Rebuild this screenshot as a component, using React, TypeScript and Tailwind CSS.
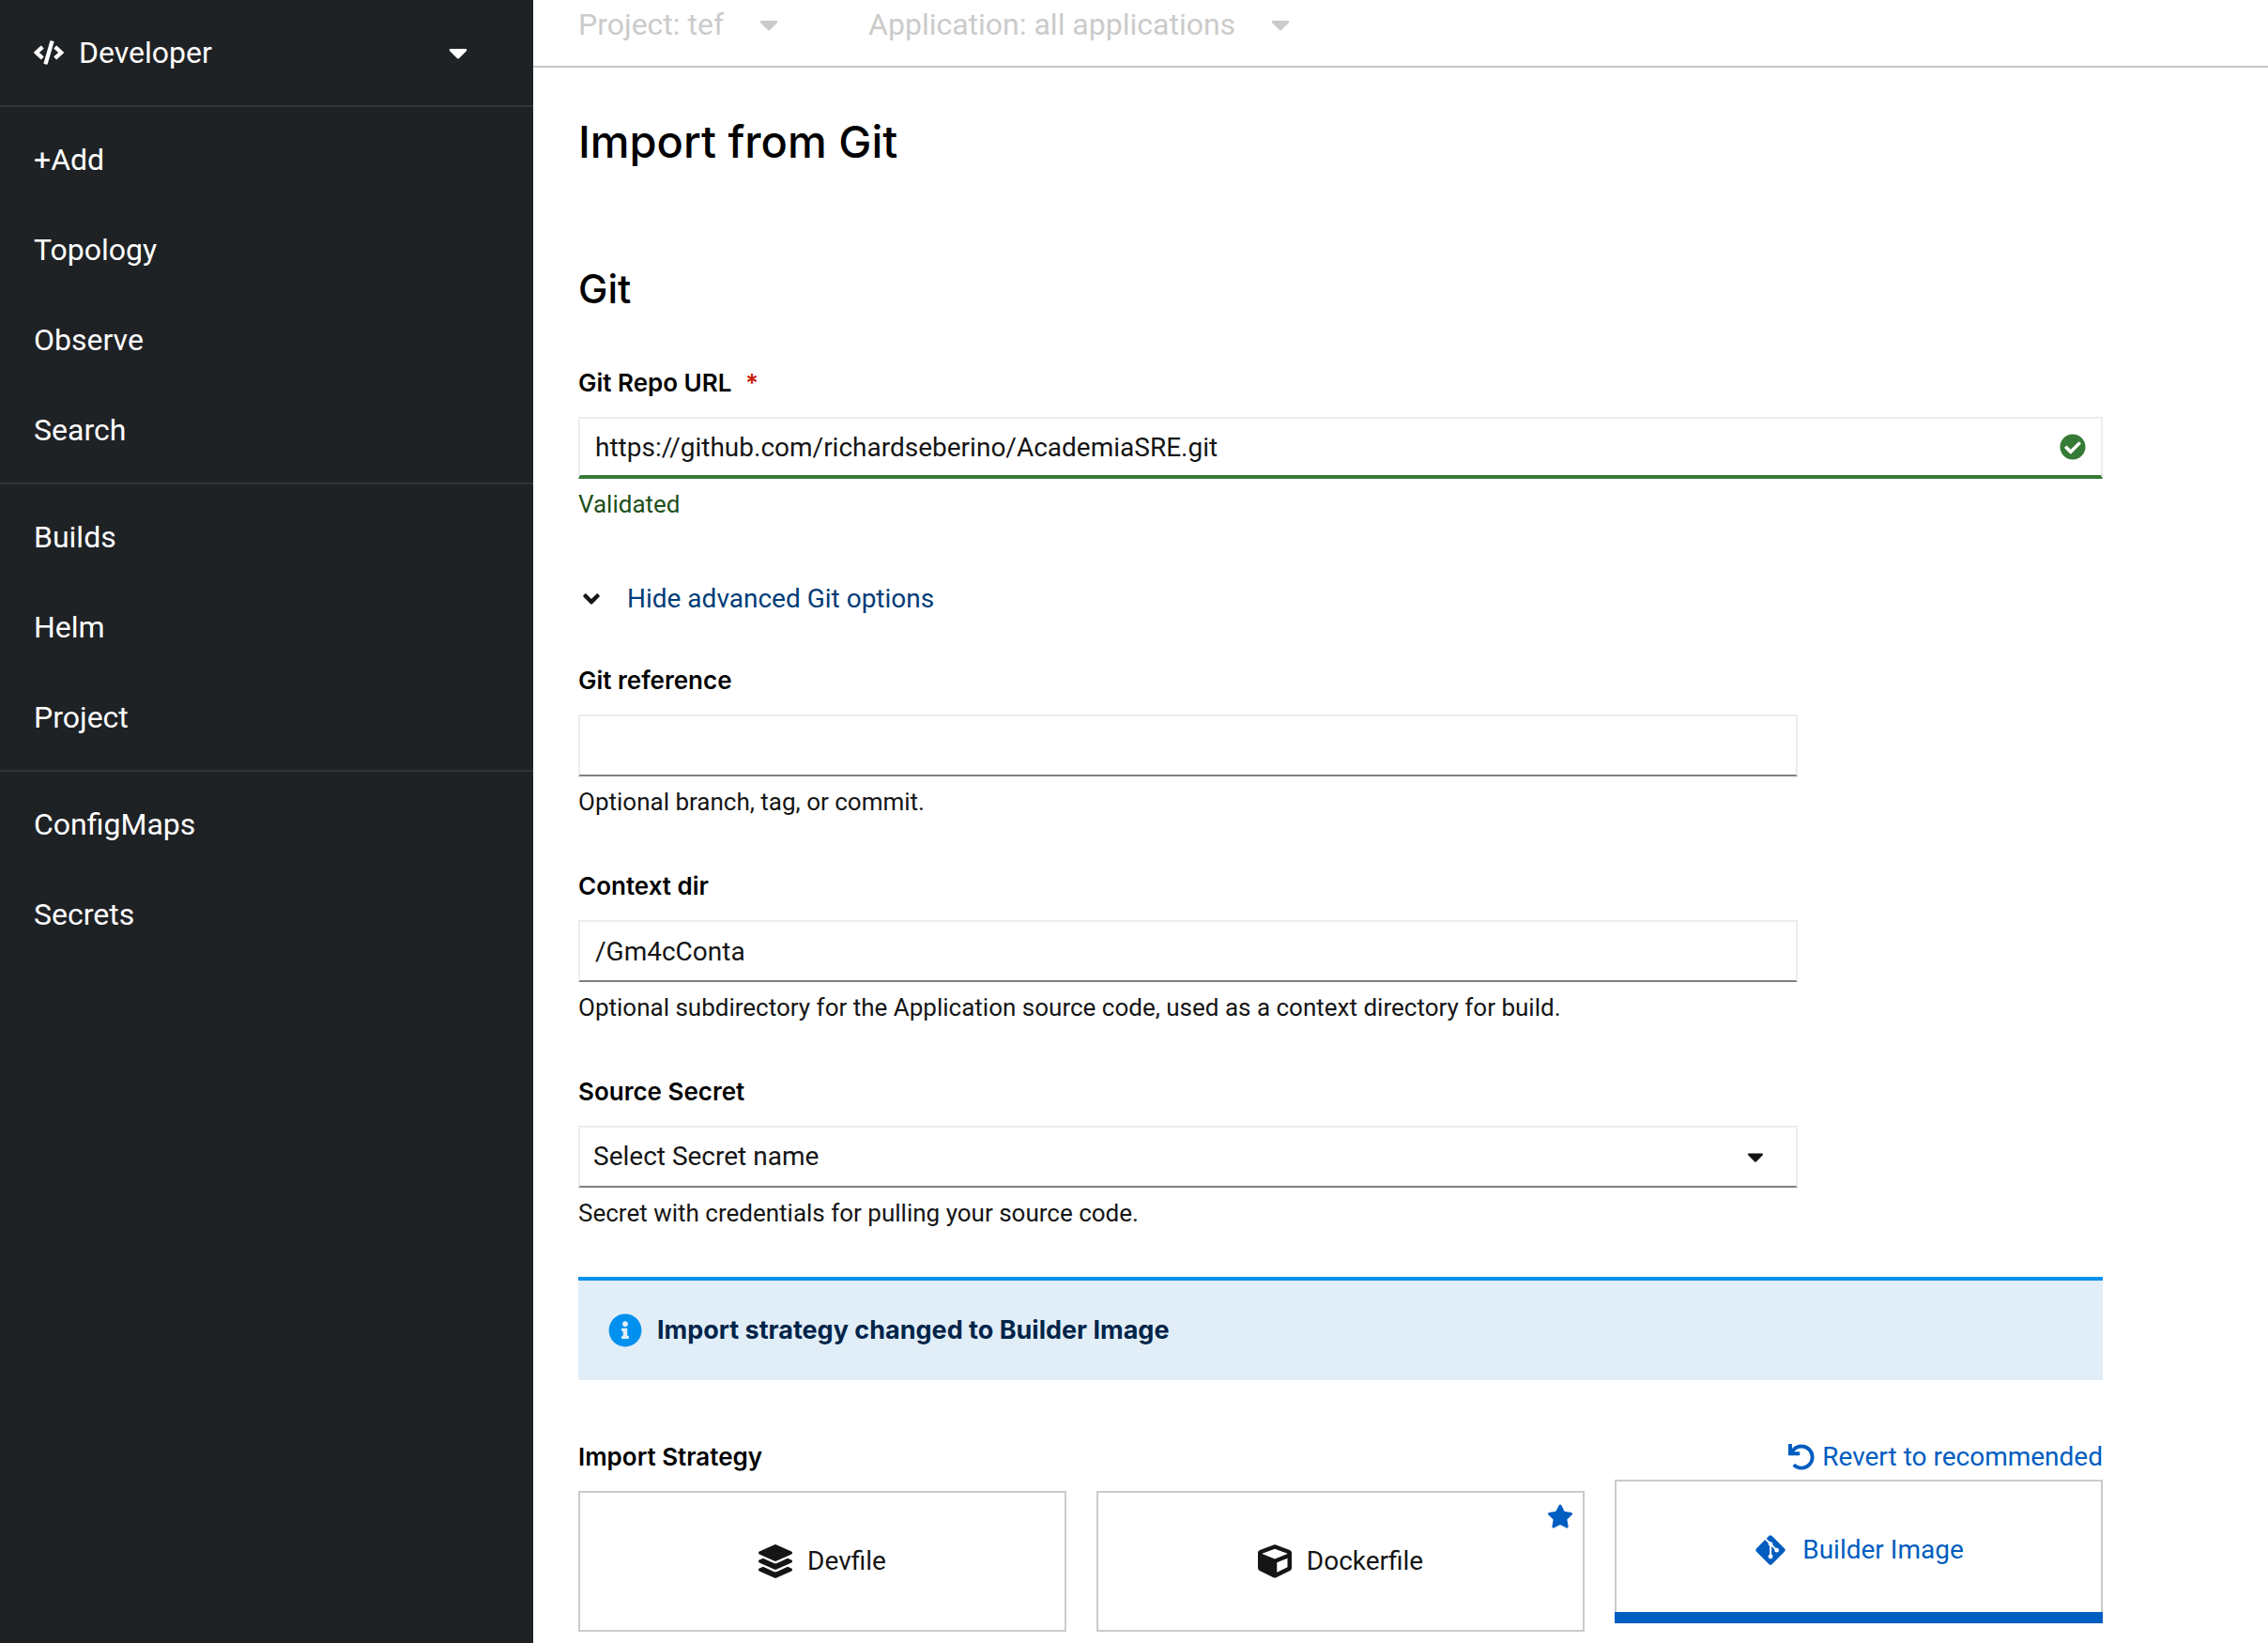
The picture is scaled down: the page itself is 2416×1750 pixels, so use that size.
import type { ReactNode } from "react";
import {
  FaAngleDown,
  FaCaretDown,
  FaCheckCircle,
  FaCode,
  FaCube,
  FaGitAlt,
  FaInfoCircle,
  FaLayerGroup,
  FaStar,
  FaUndo,
} from "react-icons/fa";

const navGroups = [
  ["+Add", "Topology", "Observe", "Search"],
  ["Builds", "Helm", "Project"],
  ["ConfigMaps", "Secrets"],
];

function Sidebar() {
  return (
    <aside className="w-[568px] shrink-0 bg-[#1f2225] text-[32px] leading-12 text-white">
      <button type="button" className="flex h-28 w-full items-center pr-[69px] pl-9 text-left">
        <FaCode className="h-[26px] w-8" />
        <span className="ml-4 flex-1">Developer</span>
        <FaCaretDown className="h-8 w-[22px]" />
      </button>
      <nav aria-label="Developer navigation">
        {navGroups.map((group) => (
          <ul key={group[0]} className="border-t-2 border-[#313538] py-2">
            {group.map((item) => (
              <li key={item}>
                <a href="#" className="block px-9 py-6">
                  {item}
                </a>
              </li>
            ))}
          </ul>
        ))}
      </nav>
    </aside>
  );
}

function ContextBar() {
  return (
    <div className="flex h-[72px] items-center gap-[96px] border-b-2 border-[#c7c7c7] px-12 pb-[18px] text-[32px] text-[#cbcbcb]">
      <button type="button" disabled className="flex items-center gap-[38px]">
        Project: tef
        <FaCaretDown className="h-8 w-5" />
      </button>
      <button type="button" disabled className="flex items-center gap-[38px]">
        Application: all applications
        <FaCaretDown className="h-8 w-5" />
      </button>
    </div>
  );
}

function Label({ htmlFor, children }: { htmlFor?: string; children: ReactNode }) {
  return (
    <label htmlFor={htmlFor} className="block font-[Inter,sans-serif] text-[26px] leading-10 font-semibold text-black">
      {children}
    </label>
  );
}

function Hint({ id, children }: { id: string; children: ReactNode }) {
  return (
    <p id={id} className="mt-2 text-[26px] leading-[38px]">
      {children}
    </p>
  );
}

const controlClass =
  "block h-[66px] w-full appearance-none border-2 border-[#ededed] border-b-[#7d8285] bg-white text-[28px] outline-none";

function StrategyCard({
  icon,
  label,
  selected,
  recommended,
}: {
  icon: ReactNode;
  label: string;
  selected?: boolean;
  recommended?: boolean;
}) {
  return (
    <button
      type="button"
      aria-pressed={!!selected}
      className={
        selected
          ? "relative -mt-3 flex h-[150px] items-center justify-center gap-4 border-2 border-[#c9cbcc] text-[#005dc0]"
          : "relative flex h-[150px] items-center justify-center gap-4 border-2 border-[#c9cbcc]"
      }
    >
      {icon}
      {label}
      {recommended && <FaStar aria-label="Recommended" className="absolute top-[11px] right-2.5 size-7 text-[#005dc0]" />}
      {selected && <span className="absolute -inset-x-0.5 -bottom-[5px] h-3 bg-[#005dc0]" />}
    </button>
  );
}

export default function App() {
  return (
    <div className="flex min-h-screen bg-white font-[Roboto,sans-serif] text-[#151515]">
      <Sidebar />
      <main className="min-w-0 flex-1">
        <ContextBar />
        <form className="px-12 pt-12" onSubmit={(e) => e.preventDefault()}>
          <div className="max-w-[1624px]">
            <h1 className="font-[Inter,sans-serif] text-[47px] leading-[62px] font-medium text-black">Import from Git</h1>
            <h2 className="mt-[101px] font-[Inter,sans-serif] text-[42px] leading-[50px] font-medium text-black">Git</h2>

            <div className="mt-[55px]">
              <Label htmlFor="repo-url">
                Git Repo URL <span className="ml-2 text-[#c9190b]">*</span>
              </Label>
              <div className="relative mt-4">
                <input
                  id="repo-url"
                  type="text"
                  required
                  aria-describedby="repo-url-status"
                  defaultValue="https://github.com/richardseberino/AcademiaSRE.git"
                  className="block h-[66px] w-full border-2 border-b-4 border-[#ededed] border-b-[#357b36] bg-white pr-16 pl-4 text-[28px] outline-none"
                />
                <FaCheckCircle className="absolute top-[18px] right-[18px] size-7 text-[#357b36]" />
              </div>
              <p id="repo-url-status" className="mt-2 text-[26px] leading-[38px] text-[#1e4f18]">
                Validated
              </p>
            </div>

            <button type="button" aria-expanded="true" className="mt-[61px] flex items-center text-[28px] leading-[42px]">
              <FaAngleDown className="h-7 w-7" />
              <span className="ml-6 text-[#003c78]">Hide advanced Git options</span>
            </button>

            <div className="mt-[46px] flex w-4/5 flex-col gap-[51px]">
              <div>
                <Label htmlFor="git-ref">Git reference</Label>
                <input id="git-ref" type="text" aria-describedby="git-ref-hint" className={`${controlClass} mt-4 px-4`} />
                <Hint id="git-ref-hint">Optional branch, tag, or commit.</Hint>
              </div>
              <div>
                <Label htmlFor="context-dir">Context dir</Label>
                <input
                  id="context-dir"
                  type="text"
                  defaultValue="/Gm4cConta"
                  aria-describedby="context-dir-hint"
                  className={`${controlClass} mt-4 px-4`}
                />
                <Hint id="context-dir-hint">
                  Optional subdirectory for the Application source code, used as a context directory for build.
                </Hint>
              </div>
              <div>
                <Label htmlFor="source-secret">Source Secret</Label>
                <div className="relative mt-4">
                  <select id="source-secret" aria-describedby="source-secret-hint" className={`${controlClass} pr-20 pl-3.5`}>
                    <option>Select Secret name</option>
                  </select>
                  <FaCaretDown className="pointer-events-none absolute top-[19px] right-9 h-7 w-[18px]" />
                </div>
                <Hint id="source-secret-hint">Secret with credentials for pulling your source code.</Hint>
              </div>
            </div>

            <div
              role="status"
              className="mt-[49px] flex h-[110px] items-center border-t-4 border-[#0090ee] bg-[#e1eef8] pl-8"
            >
              <FaInfoCircle className="size-9 text-[#0090ee]" />
              <p className="ml-4 font-[Inter,sans-serif] text-[27px] font-bold text-[#002449]">
                Import strategy changed to Builder Image
              </p>
            </div>

            <div className="mt-[62px] flex items-center justify-between">
              <p id="strategy" className="font-[Inter,sans-serif] text-[26px] leading-10 font-semibold text-black">
                Import Strategy
              </p>
              <button type="button" className="flex items-center gap-2 text-[28px] leading-10 text-[#005dc0]">
                <FaUndo className="size-7" />
                Revert to recommended
              </button>
            </div>
            <div role="group" aria-labelledby="strategy" className="mt-4 grid grid-cols-3 items-start gap-8 pb-3 text-[28px]">
              <StrategyCard icon={<FaLayerGroup className="size-9" />} label="Devfile" />
              <StrategyCard icon={<FaCube className="size-9" />} label="Dockerfile" recommended />
              <StrategyCard icon={<FaGitAlt className="size-9" />} label="Builder Image" selected />
            </div>
          </div>
        </form>
      </main>
    </div>
  );
}
